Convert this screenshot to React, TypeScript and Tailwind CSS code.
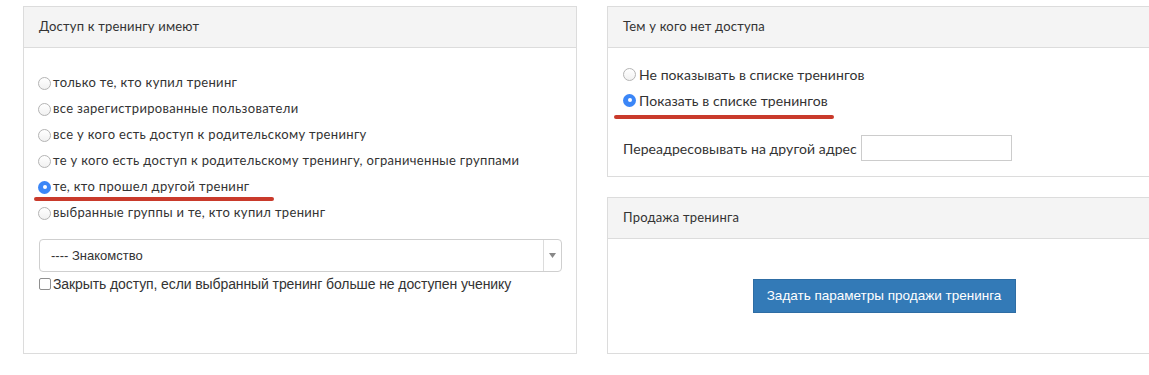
import React from "react";

const proxima = { fontFamily: '"Lato", "Open Sans", sans-serif' };
const arial = { fontFamily: '"Liberation Sans", Arial, sans-serif' };

function Radio({ checked }: { checked?: boolean }) {
  if (checked) {
    return (
      <span className="flex h-[13px] w-[13px] shrink-0 items-center justify-center rounded-full bg-[#3b86f7]">
        <span className="h-[4px] w-[4px] rounded-full bg-white" />
      </span>
    );
  }
  return (
    <span className="h-[13px] w-[13px] shrink-0 rounded-full border border-[#b4b4b4] bg-gradient-to-b from-white to-[#f1f1f1]" />
  );
}

function RadioRow({ label, checked, big }: { label: string; checked?: boolean; big?: boolean }) {
  return (
    <div
      className={
        big
          ? "flex h-[26px] items-center gap-[3px] text-[14px] tracking-[0.07px] text-[#333]"
          : "flex h-[26px] items-center gap-[2px] text-[13px] tracking-[0.33px] text-[#333]"
      }
      style={proxima}
    >
      <Radio checked={checked} />
      <span>{label}</span>
    </div>
  );
}

function Header({ title }: { title: string }) {
  return (
    <div
      className="flex h-[41px] items-center border-b border-[#dcdcdc] bg-[#f4f4f4] pl-[15px] text-[13px] tracking-[0.2px] text-[#333]"
      style={proxima}
    >
      {title}
    </div>
  );
}

export default function App() {
  return (
    <div className="h-[375px] w-[1149px] overflow-hidden bg-white">
      <div className="flex gap-[30px] pl-[23px] pt-[6px]">
        {/* Left panel */}
        <div className="relative h-[348px] w-[554px] shrink-0 border border-[#dcdcdc] bg-white">
          <Header title="Доступ к тренингу имеют" />
          <div className="pl-[14px] pt-[22px]">
            <RadioRow label="только те, кто купил тренинг" />
            <RadioRow label="все зарегистрированные пользователи" />
            <RadioRow label="все у кого есть доступ к родительскому тренингу" />
            <RadioRow label="те у кого есть доступ к родительскому тренингу, ограниченные группами" />
            <RadioRow label="те, кто прошел другой тренинг" checked />
            <RadioRow label="выбранные группы и те, кто купил тренинг" />
            <div className="ml-[1px] mt-[13px] flex h-[33px] w-[523px] items-stretch rounded-[4px] border border-[#cfcfcf] bg-white" style={arial}>
              <div className="flex flex-1 items-center pl-[11px] text-[13px] text-[#333]">---- Знакомство</div>
              <div className="flex w-[18px] items-center justify-center border-l border-[#dcdcdc]">
                <svg width="7" height="5" viewBox="0 0 7 5">
                  <path d="M0 0 H7 L3.5 5 Z" fill="#888" />
                </svg>
              </div>
            </div>
            <div className="ml-[1px] mt-[3px] flex h-[18px] items-center gap-[2px] text-[14px] tracking-[-0.1px] text-[#333]" style={arial}>
              <span className="h-[12px] w-[12px] shrink-0 rounded-[2px] border border-[#8f8f8f] bg-white" />
              <span>Закрыть доступ, если выбранный тренинг больше не доступен ученику</span>
            </div>
          </div>
          <div className="absolute left-[10px] top-[190px] h-[4px] w-[240px] rounded-full bg-[#c93a2b]" />
        </div>

        {/* Right column */}
        <div className="flex w-[554px] shrink-0 flex-col gap-[20px]">
          <div className="relative h-[171px] border border-[#dcdcdc] bg-white">
            <Header title="Тем у кого нет доступа" />
            <div className="pl-[15px] pt-[13px]">
              <RadioRow label="Не показывать в списке тренингов" big />
              <RadioRow label="Показать в списке тренингов" checked big />
              <div className="mt-[22px] flex items-center gap-[4px] text-[14px] tracking-[0.1px] text-[#333]" style={proxima}>
                <span>Переадресовывать на другой адрес</span>
                <input className="h-[26px] w-[151px] border border-[#cccccc] bg-white outline-none" />
              </div>
            </div>
            <div className="absolute left-[6px] top-[108px] h-[4px] w-[220px] rounded-full bg-[#c93a2b]" />
          </div>
          <div className="h-[157px] border border-[#dcdcdc] bg-white">
            <Header title="Продажа тренинга" />
            <div className="flex justify-center pt-[40px]">
              <button
                className="h-[34px] w-[263px] border border-[#2e6da4] bg-[#337ab7] text-[13.5px] text-white"
                style={arial}
              >
                Задать параметры продажи тренинга
              </button>
            </div>
          </div>
        </div>
      </div>
    </div>
  );
}
